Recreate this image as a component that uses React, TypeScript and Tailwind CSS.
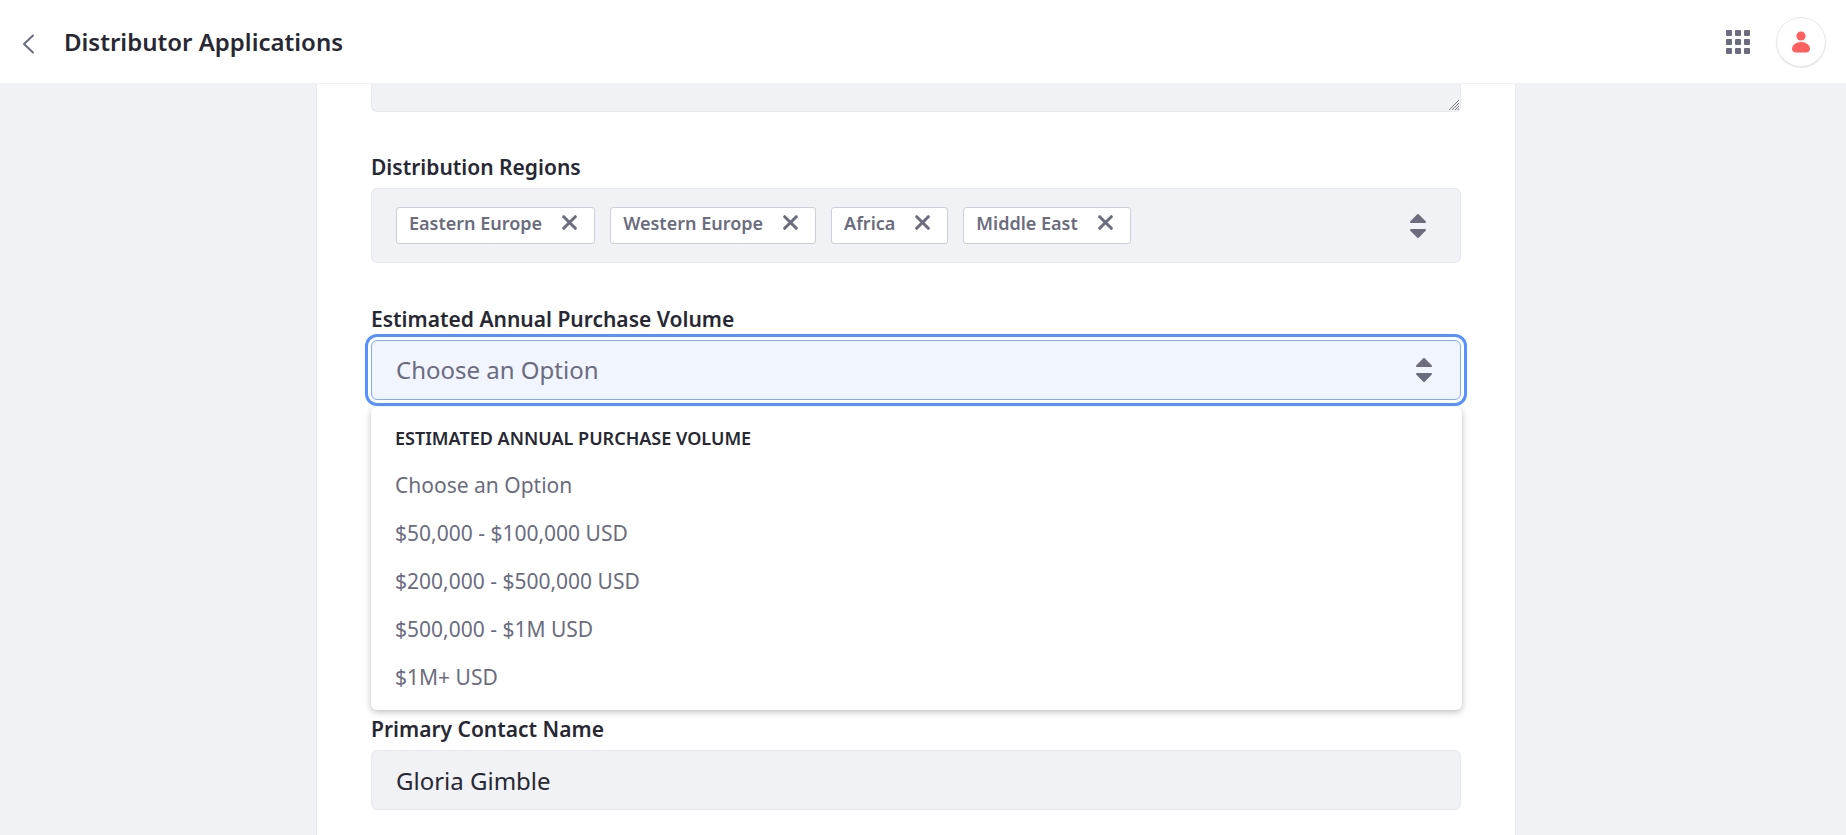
import { useState } from "react";

const volumes = [
  "Choose an Option",
  "$50,000 - $100,000 USD",
  "$200,000 - $500,000 USD",
  "$500,000 - $1M USD",
  "$1M+ USD",
];

const labelClass = "mb-[7px] block text-[21px] leading-7 font-semibold text-[#272833]";

function SortArrows() {
  return (
    <svg width="16" height="24" viewBox="0 0 16 24" fill="#6b6c7e" aria-hidden="true">
      <path d="M7.3 0.3a1 1 0 0 1 1.4 0l6.9 6.9c.7.7.2 1.8-.7 1.8H1.1C.2 9-.3 7.900.4 7.200z" />
      <path d="M7.3 23.700a1 1 0 0 0 1.400 0l6.900-6.900c.7-.7.2-1.800-.7-1.800H1.100c-.9 0-1.400 1.100-.7 1.800z" />
    </svg>
  );
}

function Header() {
  return (
    <header className="flex h-21 shrink-0 items-center border-b border-[#f1f2f5] bg-white pr-5 pl-[22px]">
      <button type="button" aria-label="Back" className="mr-[29px] pt-1">
        <svg width="13" height="20" viewBox="0 0 13 20" fill="none" stroke="#6b6c7e" strokeWidth="2" strokeLinecap="round" strokeLinejoin="round">
          <path d="M11 1.500L2 10l9 8.500" />
        </svg>
      </button>
      <h1 className="text-2xl font-semibold text-[#272833]">Distributor Applications</h1>
      <button type="button" aria-label="Applications" className="ml-auto">
        <svg width="24" height="24" viewBox="0 0 24 24" fill="#6b6c7e">
          {[0, 9, 18].map((y) =>
            [0, 9, 18].map((x) => <rect key={`${x}-${y}`} x={x} y={y} width="6" height="6" rx="1" />)
          )}
        </svg>
      </button>
      <button
        type="button"
        aria-label="Account"
        className="ml-[26px] flex size-[50px] items-center justify-center rounded-full border border-[#e7e7ed] bg-white shadow-[0_1px_1px_#e7e7ed]"
      >
        <svg width="18" height="22" viewBox="0 0 18 22" fill="#ff5f5f">
          <circle cx="9" cy="5" r="4.600" />
          <path d="M9 11c5 0 9 3 9 6.800 0 2.700-1.700 3.700-4 3.700H4c-2.300 0-4-1-4-3.700C0 14 4 11 9 11z" />
        </svg>
      </button>
    </header>
  );
}

function Tag({ name, onRemove }: { name: string; onRemove: () => void }) {
  return (
    <li className="flex h-[37px] items-center gap-5 rounded-[3px] border border-[#cdced9] bg-white pr-[17px] pb-1.5 pl-3 text-lg leading-6 font-semibold text-[#6b6c7e]">
      {name}
      <button type="button" aria-label={`Remove ${name}`} onClick={onRemove}>
        <svg width="15" height="15" viewBox="0 0 15 15" fill="none" stroke="#6b6c7e" strokeWidth="3" strokeLinecap="round">
          <path d="M1.700 1.700l11.600 11.600M13.300 1.700l-11.600 11.600" />
        </svg>
      </button>
    </li>
  );
}

export default function App() {
  const [regions, setRegions] = useState(["Eastern Europe", "Western Europe", "Africa", "Middle East"]);
  const [volume, setVolume] = useState(volumes[0]);

  return (
    <div className="flex h-screen flex-col overflow-hidden bg-[#f1f2f5] font-['Noto_Sans',sans-serif]">
      <Header />
      <main className="flex min-h-0 flex-1 justify-center pr-[14px]">
        <form className="w-full max-w-[1200px] border-x border-[#e7e7ed] bg-white px-[54px]">
          <div className="relative mb-[41px]">
            <textarea
              aria-label="Description"
              className="block h-7 w-full resize-none rounded-b-md border border-t-0 border-[#e7e7ed] bg-[#f1f2f5] outline-none"
            />
            <svg className="pointer-events-none absolute right-0.5 bottom-0.5" width="10" height="10" viewBox="0 0 10 10" fill="none" stroke="#77777c" strokeWidth="1" aria-hidden="true">
              <path d="M0 10L10 0M3 10l7-7M6 10l4-4M8.500 10l1.500-1.500" />
            </svg>
          </div>

          <div className="mb-[42px]">
            <h2 id="regions" className={labelClass}>Distribution Regions</h2>
            <div className="flex h-[75px] items-center justify-between rounded-md border border-[#e7e7ed] bg-[#f1f2f5] pr-[34px] pl-6">
              <ul aria-labelledby="regions" className="flex gap-[15px]">
                {regions.map((region) => (
                  <Tag
                    key={region}
                    name={region}
                    onRemove={() => setRegions(regions.filter((item) => item !== region))}
                  />
                ))}
              </ul>
              <button type="button" aria-label="Show regions">
                <SortArrows />
              </button>
            </div>
          </div>

          <div>
            <label htmlFor="volume" className={labelClass}>Estimated Annual Purchase Volume</label>
            <div className="relative">
              <select
                id="volume"
                value={volume}
                onChange={(event) => setVolume(event.target.value)}
                className="block h-15 w-full appearance-none rounded-md border border-[#80acff] bg-[#f0f5ff] px-6 text-2xl text-[#6b6c7e] ring-3 ring-[#5791ff] ring-offset-3 outline-none"
              >
                {volumes.map((item) => (
                  <option key={item}>{item}</option>
                ))}
              </select>
              <span className="pointer-events-none absolute inset-y-0 right-[29px] flex items-center">
                <SortArrows />
              </span>
            </div>
            <div className="mt-[7px] mb-[5px] -mr-px rounded-md bg-white py-[9px] shadow-[0_2px_6px_rgba(39,40,51,0.3)]">
              <h3 className="mb-px px-6 py-2 text-lg leading-7 font-semibold text-[#272833] uppercase">Estimated Annual Purchase Volume</h3>
              <ul role="listbox" aria-label="Estimated Annual Purchase Volume">
                {volumes.map((item) => (
                  <li
                    key={item}
                    role="option"
                    aria-selected={item === volume}
                    onClick={() => setVolume(item)}
                    className="cursor-pointer px-6 py-2.5 text-[21px] leading-7 text-[#6b6c7e]"
                  >
                    {item}
                  </li>
                ))}
              </ul>
            </div>
          </div>

          <label htmlFor="contact" className={labelClass}>Primary Contact Name</label>
          <input
            id="contact"
            type="text"
            defaultValue="Gloria Gimble"
            className="block h-15 w-full rounded-md border border-[#e7e7ed] bg-[#f1f2f5] px-6 text-2xl text-[#272833] outline-none"
          />
        </form>
      </main>
    </div>
  );
}
